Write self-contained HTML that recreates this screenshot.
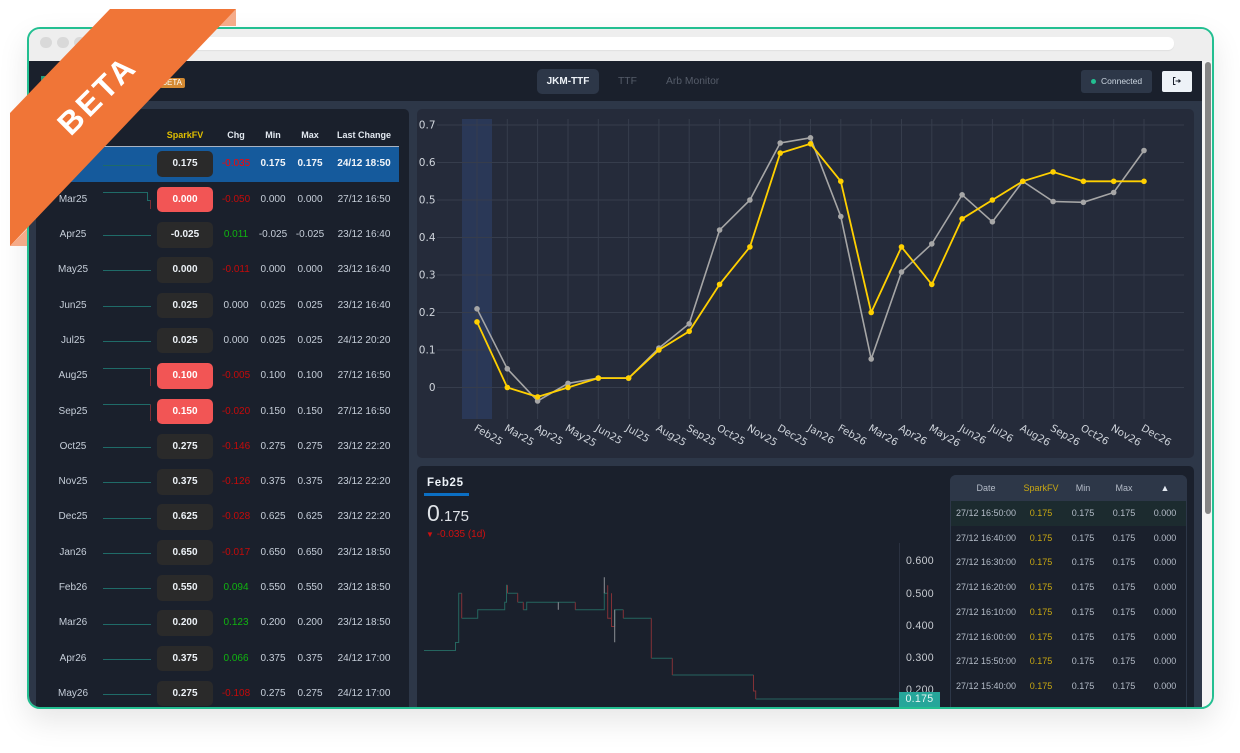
<!DOCTYPE html>
<html><head><meta charset="utf-8"><style>
html,body{margin:0;padding:0;background:#fff;width:1240px;height:753px;overflow:hidden;font-family:"Liberation Sans",sans-serif}
#w{position:absolute;left:27px;top:27px;width:1187px;height:682px;box-sizing:border-box;border:2px solid #23bf91;border-radius:13px;box-shadow:0 12px 30px rgba(0,0,0,.10);overflow:hidden;background:#fff}
.a{position:absolute}
#p{position:absolute;left:-29px;top:-29px;width:1240px;height:753px}
.r{position:absolute;left:36px;width:363px;height:35.3px;font-size:10px;color:#c6ced9;line-height:36.5px}
.r span{position:absolute;text-align:center;top:0;white-space:nowrap}
.n{left:7px;width:60px}
.s{left:121px;width:56px;height:25.5px;top:5px!important;line-height:26.5px;background:#2a2a2a;border-radius:5px;font-weight:bold;color:#edf2f7}
.s.x{background:#f25555;color:#fff}
.c{left:180px;width:40px}
.m{left:217px;width:40px}
.h{left:254px;width:40px}
.t{left:298px;width:60px}
.rd{color:#c50a0a}.gr{color:#10b410}
.hd{font-weight:bold;font-size:9px;color:#e2e8f0}
.q{position:absolute;left:951px;width:235px;height:24.7px;font-size:9px;line-height:24.7px;color:#b4bcc8}
.q span{position:absolute;top:0;text-align:center;white-space:nowrap}
.d{left:0;width:70px}.f{left:60px;width:60px;color:#c9a812}.i{left:102px;width:60px}.o{left:143px;width:60px}.z{left:184px;width:60px}
.ax{position:absolute;left:900px;width:34px;text-align:right;font-size:10.6px;color:#c8ccd2;letter-spacing:.3px}
</style></head><body>
<div id="w"><div id="p">
<div class="a" style="left:29px;top:29px;width:1184px;height:32px;background:#eee"></div>
<div class="a" style="left:40px;top:36.5px;width:11.5px;height:11.5px;border-radius:50%;background:#d9d9d9"></div>
<div class="a" style="left:57px;top:36.5px;width:11.5px;height:11.5px;border-radius:50%;background:#d9d9d9"></div>
<div class="a" style="left:74px;top:36.5px;width:11.5px;height:11.5px;border-radius:50%;background:#d9d9d9"></div>
<div class="a" style="left:90px;top:37px;width:1084px;height:12.5px;border-radius:6px;background:#fff;box-shadow:0 1px 1px rgba(0,0,0,.06)"></div>

<div class="a" style="left:29px;top:61px;width:1173px;height:650px;background:#2d3748"></div>
<div class="a" style="left:1202px;top:61px;width:10px;height:650px;background:#f4f4f4"></div>
<div class="a" style="left:1205px;top:62px;width:6px;height:452px;background:#858585;border-radius:3px"></div>

<div class="a" style="left:29px;top:61px;width:1173px;height:40px;background:#1a202c"></div>
<div class="a" style="left:41px;top:76px;width:6px;height:5px;background:#1f9e7c"></div>
<div class="a" style="left:160px;top:78px;width:25px;height:10px;background:#d38a33;border-radius:2px;color:#fff;font-size:8px;line-height:10px;text-align:right;padding-right:3px;box-sizing:border-box">BETA</div>
<div class="a" style="left:537px;top:69px;width:62px;height:25px;border-radius:5px;background:#2d3748;color:#edf2f7;font-size:10px;font-weight:bold;line-height:25px;text-align:center">JKM-TTF</div>
<div class="a" style="left:618px;top:69px;color:#555c69;font-size:10.3px;line-height:25px">TTF</div>
<div class="a" style="left:666px;top:69px;color:#555c69;font-size:10.3px;line-height:25px">Arb Monitor</div>
<div class="a" style="left:1081px;top:70px;width:71px;height:23px;border-radius:3px;background:#2d3748;color:#cbd5e0;font-size:8.5px;line-height:23px;text-indent:20px">Connected</div>
<div class="a" style="left:1091px;top:79px;width:5px;height:5px;border-radius:50%;background:#23bf91"></div>
<div class="a" style="left:1162px;top:71px;width:30px;height:21px;border-radius:2px;background:#edf2f7"></div>
<svg class="a" style="left:1172px;top:76px" width="10" height="10" viewBox="0 0 10 10" fill="none" stroke="#1a202c" stroke-width="1"><path d="M3.5 1.5H1.5V8.5H3.5"/><path d="M3.5 5H8"/><path d="M6.5 3.5L8.3 5L6.5 6.5" fill="#1a202c"/></svg>

<!-- left panel -->
<div class="a" style="left:36px;top:109px;width:373px;height:602px;background:#1a202c;border-radius:5px 5px 0 0"></div>
<div class="r hd" style="top:117px"><span class="s" style="background:none;top:5px;color:#e0bf00;font-size:9px">SparkFV</span><span class="c">Chg</span><span class="m">Min</span><span class="h">Max</span><span class="t">Last Change</span></div>
<div class="a" style="left:36px;top:146px;width:363px;height:1px;background:#a9b3c2"></div>
<div class="r" style="top:147px;height:35px;background:#155a9c;color:#f2f5f9;font-weight:bold;line-height:34px"><span class="n">Feb25</span><span class="s" style="top:4px!important">0.175</span><span class="c" style="color:#f00;font-weight:normal">-0.035</span><span class="m">0.175</span><span class="h">0.175</span><span class="t">24/12 18:50</span></div>
<div class="r" style="top:181.7px"><span class="n">Mar25</span><span class="s x">0.000</span><span class="c rd">-0.050</span><span class="m">0.000</span><span class="h">0.000</span><span class="t">27/12 16:50</span></div>
<div class="r" style="top:217px"><span class="n">Apr25</span><span class="s">-0.025</span><span class="c gr">0.011</span><span class="m">-0.025</span><span class="h">-0.025</span><span class="t">23/12 16:40</span></div>
<div class="r" style="top:252.3px"><span class="n">May25</span><span class="s">0.000</span><span class="c rd">-0.011</span><span class="m">0.000</span><span class="h">0.000</span><span class="t">23/12 16:40</span></div>
<div class="r" style="top:287.6px"><span class="n">Jun25</span><span class="s">0.025</span><span class="c">0.000</span><span class="m">0.025</span><span class="h">0.025</span><span class="t">23/12 16:40</span></div>
<div class="r" style="top:322.9px"><span class="n">Jul25</span><span class="s">0.025</span><span class="c">0.000</span><span class="m">0.025</span><span class="h">0.025</span><span class="t">24/12 20:20</span></div>
<div class="r" style="top:358.2px"><span class="n">Aug25</span><span class="s x">0.100</span><span class="c rd">-0.005</span><span class="m">0.100</span><span class="h">0.100</span><span class="t">27/12 16:50</span></div>
<div class="r" style="top:393.5px"><span class="n">Sep25</span><span class="s x">0.150</span><span class="c rd">-0.020</span><span class="m">0.150</span><span class="h">0.150</span><span class="t">27/12 16:50</span></div>
<div class="r" style="top:428.8px"><span class="n">Oct25</span><span class="s">0.275</span><span class="c rd">-0.146</span><span class="m">0.275</span><span class="h">0.275</span><span class="t">23/12 22:20</span></div>
<div class="r" style="top:464.1px"><span class="n">Nov25</span><span class="s">0.375</span><span class="c rd">-0.126</span><span class="m">0.375</span><span class="h">0.375</span><span class="t">23/12 22:20</span></div>
<div class="r" style="top:499.4px"><span class="n">Dec25</span><span class="s">0.625</span><span class="c rd">-0.028</span><span class="m">0.625</span><span class="h">0.625</span><span class="t">23/12 22:20</span></div>
<div class="r" style="top:534.7px"><span class="n">Jan26</span><span class="s">0.650</span><span class="c rd">-0.017</span><span class="m">0.650</span><span class="h">0.650</span><span class="t">23/12 18:50</span></div>
<div class="r" style="top:570px"><span class="n">Feb26</span><span class="s">0.550</span><span class="c gr">0.094</span><span class="m">0.550</span><span class="h">0.550</span><span class="t">23/12 18:50</span></div>
<div class="r" style="top:605.3px"><span class="n">Mar26</span><span class="s">0.200</span><span class="c gr">0.123</span><span class="m">0.200</span><span class="h">0.200</span><span class="t">23/12 18:50</span></div>
<div class="r" style="top:640.6px"><span class="n">Apr26</span><span class="s">0.375</span><span class="c gr">0.066</span><span class="m">0.375</span><span class="h">0.375</span><span class="t">24/12 17:00</span></div>
<div class="r" style="top:675.9px"><span class="n">May26</span><span class="s">0.275</span><span class="c rd">-0.108</span><span class="m">0.275</span><span class="h">0.275</span><span class="t">24/12 17:00</span></div>
<svg class="a" style="left:0;top:0" width="420" height="720" fill="none" stroke-width="1">
<path stroke="#1f6b68" d="M103 165.5H151M103 192.5H147.5V200.5H150.5M103 235.5H151M103 270.5H151M103 306.5H151M103 341.5H151M103 368.5H150.5M103 404.5H150.5M103 447.5H151M103 482.5H151M103 518.5H151M103 553.5H151M103 588.5H151M103 624.5H151M103 659.5H151M103 694.5H151"/>
<path stroke="#7d2d33" d="M150.5 200V209M150.5 368.5V386M150.5 404.5V421"/>
</svg>

<!-- top chart -->
<div class="a" style="left:417px;top:109px;width:777px;height:349px;background:#252b3a;border-radius:5px"></div>
<div class="a" style="left:462px;top:119px;width:30px;height:300px;background:#2a3857"></div>
<svg class="a" style="left:0;top:0" width="1240" height="460" font-family="'DejaVu Sans',sans-serif" font-size="10.2" fill="#cfd4db">
<defs>
<marker id="my" markerUnits="userSpaceOnUse" markerWidth="7" markerHeight="7" refX="3.5" refY="3.5"><circle cx="3.5" cy="3.5" r="2.8" fill="#ffd000"/></marker>
<marker id="mg" markerUnits="userSpaceOnUse" markerWidth="7" markerHeight="7" refX="3.5" refY="3.5"><circle cx="3.5" cy="3.5" r="2.8" fill="#a6a6a6"/></marker>
</defs>
<path fill="none" stroke="#363d4c" stroke-width="1" d="M437 125H1184M437 162.5H1184M437 200H1184M437 237.5H1184M437 275H1184M437 312.5H1184M437 350H1184M437 387.5H1184M477 119V419M507.3 119V419M537.6 119V419M568 119V419M598.3 119V419M628.6 119V419M658.9 119V419M689.2 119V419M719.6 119V419M749.9 119V419M780.2 119V419M810.5 119V419M840.8 119V419M871.2 119V419M901.5 119V419M931.8 119V419M962.1 119V419M992.4 119V419M1022.8 119V419M1053.1 119V419M1083.4 119V419M1113.7 119V419M1144 119V419"/>
<polyline fill="none" stroke="#a6a6a6" stroke-width="1.6" marker-start="url(#mg)" marker-mid="url(#mg)" marker-end="url(#mg)" points="477,308.8 507.3,368.8 537.6,401 568,383.4 598.3,378.1 628.6,378.1 658.9,348.1 689.2,323.8 719.6,230 749.9,200 780.2,143 810.5,137.8 840.8,216.5 871.2,359 901.5,272 931.8,243.9 962.1,194.8 992.4,221.8 1022.8,181.3 1053.1,201.5 1083.4,202.3 1113.7,192.5 1144,150.5"/>
<polyline fill="none" stroke="#ffd000" stroke-width="1.8" marker-start="url(#my)" marker-mid="url(#my)" marker-end="url(#my)" points="477,321.9 507.3,387.5 537.6,396.9 568,387.5 598.3,378.1 628.6,378.1 658.9,350 689.2,331.3 719.6,284.4 749.9,246.9 780.2,153.1 810.5,143.8 840.8,181.3 871.2,312.5 901.5,246.9 931.8,284.4 962.1,218.8 992.4,200 1022.8,181.3 1053.1,171.9 1083.4,181.3 1113.7,181.3 1144,181.3"/>
<g text-anchor="end" font-size="10.5"><text x="435.5" y="128.5">0.7</text><text x="435.5" y="166">0.6</text><text x="435.5" y="203.5">0.5</text><text x="435.5" y="241">0.4</text><text x="435.5" y="278.5">0.3</text><text x="435.5" y="316">0.2</text><text x="435.5" y="353.5">0.1</text><text x="435.5" y="391">0</text></g>
<text transform="translate(473.5,430) rotate(30)">Feb25</text>
<text transform="translate(503.8,430) rotate(30)">Mar25</text>
<text transform="translate(534.1,430) rotate(30)">Apr25</text>
<text transform="translate(564.5,430) rotate(30)">May25</text>
<text transform="translate(594.8,430) rotate(30)">Jun25</text>
<text transform="translate(625.1,430) rotate(30)">Jul25</text>
<text transform="translate(655.4,430) rotate(30)">Aug25</text>
<text transform="translate(685.7,430) rotate(30)">Sep25</text>
<text transform="translate(716.1,430) rotate(30)">Oct25</text>
<text transform="translate(746.4,430) rotate(30)">Nov25</text>
<text transform="translate(776.7,430) rotate(30)">Dec25</text>
<text transform="translate(807,430) rotate(30)">Jan26</text>
<text transform="translate(837.3,430) rotate(30)">Feb26</text>
<text transform="translate(867.7,430) rotate(30)">Mar26</text>
<text transform="translate(898,430) rotate(30)">Apr26</text>
<text transform="translate(928.3,430) rotate(30)">May26</text>
<text transform="translate(958.6,430) rotate(30)">Jun26</text>
<text transform="translate(988.9,430) rotate(30)">Jul26</text>
<text transform="translate(1019.3,430) rotate(30)">Aug26</text>
<text transform="translate(1049.6,430) rotate(30)">Sep26</text>
<text transform="translate(1079.9,430) rotate(30)">Oct26</text>
<text transform="translate(1110.2,430) rotate(30)">Nov26</text>
<text transform="translate(1140.5,430) rotate(30)">Dec26</text>
</svg>

<!-- bottom panel -->
<div class="a" style="left:417px;top:466px;width:777px;height:245px;background:#1a202c;border-radius:5px 5px 0 0"></div>
<div class="a" style="left:427px;top:476px;color:#edf2f7;font-size:11.5px;font-weight:bold;letter-spacing:.7px;line-height:14px">Feb25</div>
<div class="a" style="left:424px;top:492.5px;width:45px;height:3px;background:#0b6fc4"></div>
<div class="a" style="left:427px;top:499px;color:#dfe3e8;line-height:28px;white-space:nowrap"><span style="font-size:23px">0</span><span style="font-size:15px">.175</span></div>
<div class="a" style="left:426px;top:528px;color:#d01010;font-size:10px;line-height:13px;white-space:nowrap"><span style="font-size:8px">▼</span>&nbsp;-0.035 (1d)</div>
<div class="a" style="left:899px;top:543px;width:1px;height:168px;background:#2a3140"></div>
<div class="ax" style="top:555px">0.600</div>
<div class="ax" style="top:588px">0.500</div>
<div class="ax" style="top:620px">0.400</div>
<div class="ax" style="top:652px">0.300</div>
<div class="ax" style="top:684px">0.200</div>
<svg class="a" style="left:0;top:0" width="900" height="720" fill="none">
<path stroke="#25655f" stroke-width="1" d="M424 650.5H455.5V642.5H458.7V593.3H461.7M461.7 618.3H477.7V609.7H504.7V602.3H506.5V585.3H507.5M507.5 593.3H517.7M517.7 602.3H523.3M523.3 609.7H526.7V602.3H558.3M558.3 602.3H575.3M575.3 609.7H604.3V593.3H607.7M614.7 626.5V609.7H623.3M623.3 618.3H651.3M651.3 658.3H672.3M672.3 675H753.5M755.7 699H899"/>
<path stroke="#823136" stroke-width="1" d="M461.7 593.3V618.3M507.5 585.3V593.3M517.7 593.3V602.3M523.3 602.3V609.7M575.3 602.3V609.7M607.7 585.3V618.3H611.5M611.5 593.3V626.5H614.7M623.3 609.7V618.3M651.3 618.3V658.3M672.3 658.3V675M753.5 675V691H755.7V699"/>
<path stroke="#8b8f94" stroke-width="1" d="M558.3 602.3V609.7M604.3 577.3V593.3M614.7 609.7V642.3"/>
</svg>
<div class="a" style="left:899px;top:692px;width:41px;height:16px;background:#26a69a;color:#e8f5f3;font-size:10.6px;line-height:15px;text-align:center;letter-spacing:.3px">0.175</div>

<!-- data table -->
<div class="a" style="left:950px;top:475px;width:237px;height:236px;box-sizing:border-box;border:1px solid #2d3748;border-radius:6px 6px 0 0"></div>
<div class="a" style="left:950px;top:475px;width:237px;height:26px;background:#2d3748;border-radius:6px 6px 0 0"></div>
<div class="a" style="left:951px;top:501px;width:235px;height:24.7px;background:#1c2b2f"></div>
<div class="q" style="top:475px;line-height:26px;color:#b4bcc8"><span class="d">Date</span><span class="f">SparkFV</span><span class="i">Min</span><span class="o">Max</span><span class="z" style="color:#e2e8f0">▲</span></div>
<div class="q" style="top:501px"><span class="d">27/12 16:50:00</span><span class="f">0.175</span><span class="i">0.175</span><span class="o">0.175</span><span class="z">0.000</span></div>
<div class="q" style="top:525.7px"><span class="d">27/12 16:40:00</span><span class="f">0.175</span><span class="i">0.175</span><span class="o">0.175</span><span class="z">0.000</span></div>
<div class="q" style="top:550.4px"><span class="d">27/12 16:30:00</span><span class="f">0.175</span><span class="i">0.175</span><span class="o">0.175</span><span class="z">0.000</span></div>
<div class="q" style="top:575.1px"><span class="d">27/12 16:20:00</span><span class="f">0.175</span><span class="i">0.175</span><span class="o">0.175</span><span class="z">0.000</span></div>
<div class="q" style="top:599.8px"><span class="d">27/12 16:10:00</span><span class="f">0.175</span><span class="i">0.175</span><span class="o">0.175</span><span class="z">0.000</span></div>
<div class="q" style="top:624.5px"><span class="d">27/12 16:00:00</span><span class="f">0.175</span><span class="i">0.175</span><span class="o">0.175</span><span class="z">0.000</span></div>
<div class="q" style="top:649.2px"><span class="d">27/12 15:50:00</span><span class="f">0.175</span><span class="i">0.175</span><span class="o">0.175</span><span class="z">0.000</span></div>
<div class="q" style="top:673.9px"><span class="d">27/12 15:40:00</span><span class="f">0.175</span><span class="i">0.175</span><span class="o">0.175</span><span class="z">0.000</span></div>
</div></div>

<!-- ribbon -->
<svg class="a" style="left:0;top:0" width="260" height="260">
<polygon fill="#f5ab89" points="219,26 236,9 236,26"/>
<polygon fill="#f5ab89" points="10,246 27,246 27,229"/>
<polygon fill="#f07537" points="110,9 236,9 10,246 10,113"/>
<text x="0" y="0" transform="translate(97,95) rotate(-45)" text-anchor="middle" dominant-baseline="central" font-family="'Liberation Sans',sans-serif" font-weight="bold" font-size="32" letter-spacing="3" fill="#fff">BETA</text>
</svg>
</body></html>
